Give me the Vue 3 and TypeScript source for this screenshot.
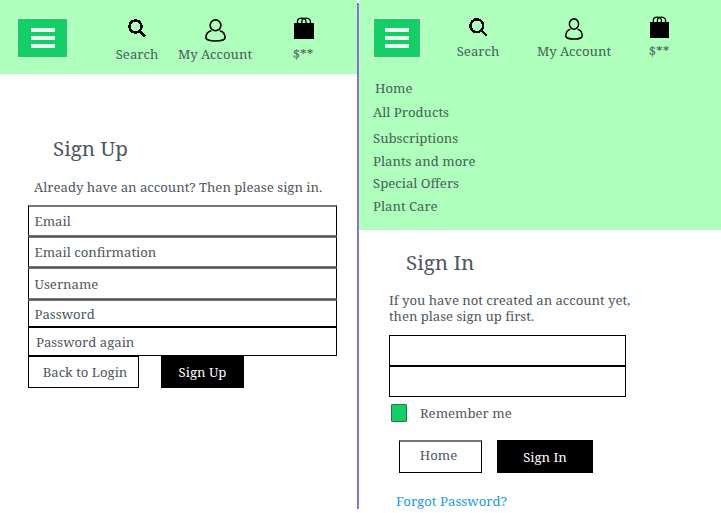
<script setup lang="ts">
import { ref } from 'vue'

interface Field { name: string; label: string }

const signUpFields: Field[] = [
  { name: 'email', label: 'Email' },
  { name: 'email-confirmation', label: 'Email confirmation' },
  { name: 'username', label: 'Username' },
  { name: 'password', label: 'Password' },
  { name: 'password-again', label: 'Password again' },
]
const menu: string[] = ['Home', 'All Products', 'Subscriptions', 'Plants and more', 'Special Offers', 'Plant Care']
const remember = ref(true)
</script>

<template>
  <main class="page">
    <section class="pane sign-up">
      <header class="bar">
        <button class="burger" aria-label="Menu"><i /><i /><i /></button>
        <a class="tool search">
          <svg width="18" height="19" viewBox="0 0 18 19" shape-rendering="crispEdges"><circle cx="7.5" cy="7.5" r="6.1" fill="none" stroke="#000" stroke-width="2.5" /><path d="M11.5 11.5L17 17.3" stroke="#000" stroke-width="2.8" /></svg>
          <span>Search</span>
        </a>
        <a class="tool account">
          <svg width="21" height="23" viewBox="0 0 21 23" fill="none" stroke="#000" stroke-width="1.6"><circle cx="10.5" cy="6.3" r="5.4" /><path d="M6.3 11.7C3 12.4 1 15.5.9 18.8C.9 20.5 4.6 22 10.5 22S20.1 20.5 20.1 18.8C20 15.5 18 12.4 14.7 11.7" /></svg>
          <span>My Account</span>
        </a>
        <a class="tool cart">
          <svg width="20" height="22" viewBox="0 0 20 22"><path d="M0 6H20V22H0Z" /><path d="M3.5 7V4.5C3.5 0 12 0 12 4.5V7M7.8 7V4.5C7.8 0 16.4 0 16.4 4.5V7" fill="none" stroke="#000" stroke-width="1.4" /></svg>
          <span>$**</span>
        </a>
      </header>
      <h1>Sign Up</h1>
      <p class="intro">Already have an account? Then please sign in.</p>
      <form class="fields">
        <label v-for="f in signUpFields" :key="f.name" class="field" :class="f.name">{{ f.label }}</label>
      </form>
      <div class="actions">
        <button class="btn">Back to Login</button>
        <button class="btn solid">Sign Up</button>
      </div>
    </section>

    <div class="divider" />

    <section class="pane sign-in">
      <header class="bar">
        <button class="burger" aria-label="Menu"><i /><i /><i /></button>
        <a class="tool search">
          <svg width="19" height="19" viewBox="0 0 19 19" shape-rendering="crispEdges"><circle cx="7.8" cy="7.7" r="6.4" fill="none" stroke="#000" stroke-width="2.5" /><path d="M12 12L18 18" stroke="#000" stroke-width="2.8" /></svg>
          <span>Search</span>
        </a>
        <a class="tool account">
          <svg width="18" height="22" viewBox="0 0 21 23" preserveAspectRatio="none" fill="none" stroke="#000" stroke-width="1.7"><circle cx="10.5" cy="6.3" r="5.4" /><path d="M6.3 11.7C3 12.4 1 15.5.9 18.8C.9 20.5 4.6 22 10.5 22S20.1 20.5 20.1 18.8C20 15.5 18 12.4 14.7 11.7" /></svg>
          <span>My Account</span>
        </a>
        <a class="tool cart">
          <svg width="19" height="22" viewBox="0 0 20 22" preserveAspectRatio="none"><path d="M0 6H20V22H0Z" /><path d="M3.5 7V4.5C3.5 0 12 0 12 4.5V7M7.8 7V4.5C7.8 0 16.4 0 16.4 4.5V7" fill="none" stroke="#000" stroke-width="1.4" /></svg>
          <span>$**</span>
        </a>
      </header>
      <nav class="menu"><a v-for="m in menu" :key="m">{{ m }}</a></nav>
      <h1>Sign In</h1>
      <p class="intro">If you have not created an account yet,<br>then plase sign up first.</p>
      <div class="inputs"><div class="input" /><div class="input" /></div>
      <div class="remember" @click="remember = !remember">
        <i class="check" :class="{ on: remember }" /><span>Remember me</span>
      </div>
      <div class="actions">
        <button class="btn">Home</button>
        <button class="btn solid">Sign In</button>
      </div>
      <a class="forgot">Forgot Password?</a>
    </section>
  </main>
</template>

<style>
body { background: #fff; }
</style>

<style scoped>
* { box-sizing: border-box; }
.page {
  display: flex;
  width: 721px;
  height: 513px;
  overflow: hidden;
  background: #fff;
  color: #4e5660;
  font: 13.15px/16px "Noto Serif", "Droid Serif", serif;
  white-space: nowrap;
}
.pane { display: flex; flex-direction: column; align-items: flex-start; }
.sign-up { width: 357px; }
.sign-in { width: 362px; }
.divider {
  width: 2px;
  height: 506px;
  margin-top: 3px;
  background: linear-gradient(90deg, #7c5fc4, #9c80e8);
}
.bar {
  display: flex;
  align-items: flex-start;
  width: 100%;
  background: #afffbd;
  color: #436256;
}
.sign-up .bar { height: 74px; padding-left: 17px; }
.sign-in .bar { height: 74px; padding-left: 14px; }
.burger {
  display: flex;
  flex-direction: column;
  align-items: center;
  justify-content: center;
  gap: 4px;
  height: 40px;
  margin: 18px 0 0;
  padding: 0;
  border: 1px solid #dcf7e6;
  border-radius: 0;
  background: #14ce66;
}
.burger i { width: 24px; height: 4px; background: #e9fff1; }
.sign-up .burger { width: 51px; }
.sign-in .burger { width: 48px; }
.tool { display: flex; flex-direction: column; align-items: center; }
.tool svg { display: block; }
.sign-up .tool span { margin-top: auto; }
.sign-up .tool { height: 62px; }
.sign-in .tool { height: 59px; }
.sign-in .tool span { margin-top: auto; }
.sign-up .search { width: 44px; margin-left: 47px; padding-top: 19px; }
.sign-up .account { width: 76px; margin-left: 18px; padding-top: 19px; }
.sign-up .cart { width: 22px; margin-left: 39px; padding-top: 17px; }
.sign-up .cart svg { margin-left: 2px; }
.sign-in .search { width: 44px; margin-left: 35px; padding-top: 18px; }
.sign-in .account { width: 76px; margin-left: 36px; padding-top: 18px; }
.sign-in .cart { width: 22px; margin-left: 36px; padding-top: 16px; }
.sign-in .cart svg { margin-left: 1px; }
h1 { margin: 0; font-size: 20.6px; font-weight: 400; line-height: 24px; }
.intro { margin: 0; }
.sign-up h1 { margin: 62px 0 0 53px; }
.sign-up .intro { margin: 19px 0 0 34px; }
.fields {
  display: flex;
  flex-direction: column;
  gap: 1px;
  width: 309px;
  margin: 10px 0 0 28px;
  background: #555;
}
.field {
  display: flex;
  align-items: center;
  height: 31px;
  padding-left: 5.5px;
  background: #fff;
  border: 1px solid #777;
  border-left-color: #000;
  border-right-color: #000;
}
.field.email { border-top-width: 2px; }
.field.email-confirmation { height: 30px; }
.field.password { height: 27px; border-bottom: 1px solid #000; }
.field.password-again { height: 29px; margin-top: -1px; padding-left: 7px; border-color: #000; }
.actions { display: flex; }
.btn {
  padding: 0;
  border: 1px solid #000;
  border-radius: 0;
  background: #fff;
  color: inherit;
  font: inherit;
}
.btn.solid { background: #000; color: #fff; }
.sign-up .actions { gap: 22px; margin-left: 28px; }
.sign-up .btn { width: 111px; height: 32px; padding-left: 3px; }
.sign-up .btn.solid { width: 83px; padding: 0; }
.menu {
  display: flex;
  flex-direction: column;
  width: 100%;
  height: 156px;
  padding: 6px 0 0 14px;
  background: #afffbd;
  color: #436256;
}
.menu a { margin-bottom: 7px; }
.menu a:first-child { margin: 0 0 8px 2px; }
.menu a:nth-child(2) { margin-bottom: 10px; }
.menu a:nth-child(4) { margin-bottom: 6px; }
.sign-in h1 { margin: 20px 0 0 47px; }
.sign-in .intro { margin: 18px 0 0 30px; letter-spacing: -0.03px; }
.inputs { width: 237px; margin: 11px 0 0 30px; }
.input { height: 31px; border: 1px solid #000; background: #fff; }
.remember { display: flex; align-items: center; gap: 13px; margin: 7px 0 0 32px; }
.check { width: 16px; height: 18px; border: 1px solid #2b7549; border-radius: 1px; }
.check.on { background: #14ce66; }
.sign-in .actions { gap: 15px; margin: 18px 0 0 40px; }
.sign-in .btn { width: 83px; height: 33px; border-top: 2px solid #777; padding: 0 4px 4px 0; }
.sign-in .btn.solid { width: 96px; border-color: #000; padding: 0; }
.forgot { margin: 20px 0 0 37px; color: #159bea; letter-spacing: 0.04px; }
</style>
